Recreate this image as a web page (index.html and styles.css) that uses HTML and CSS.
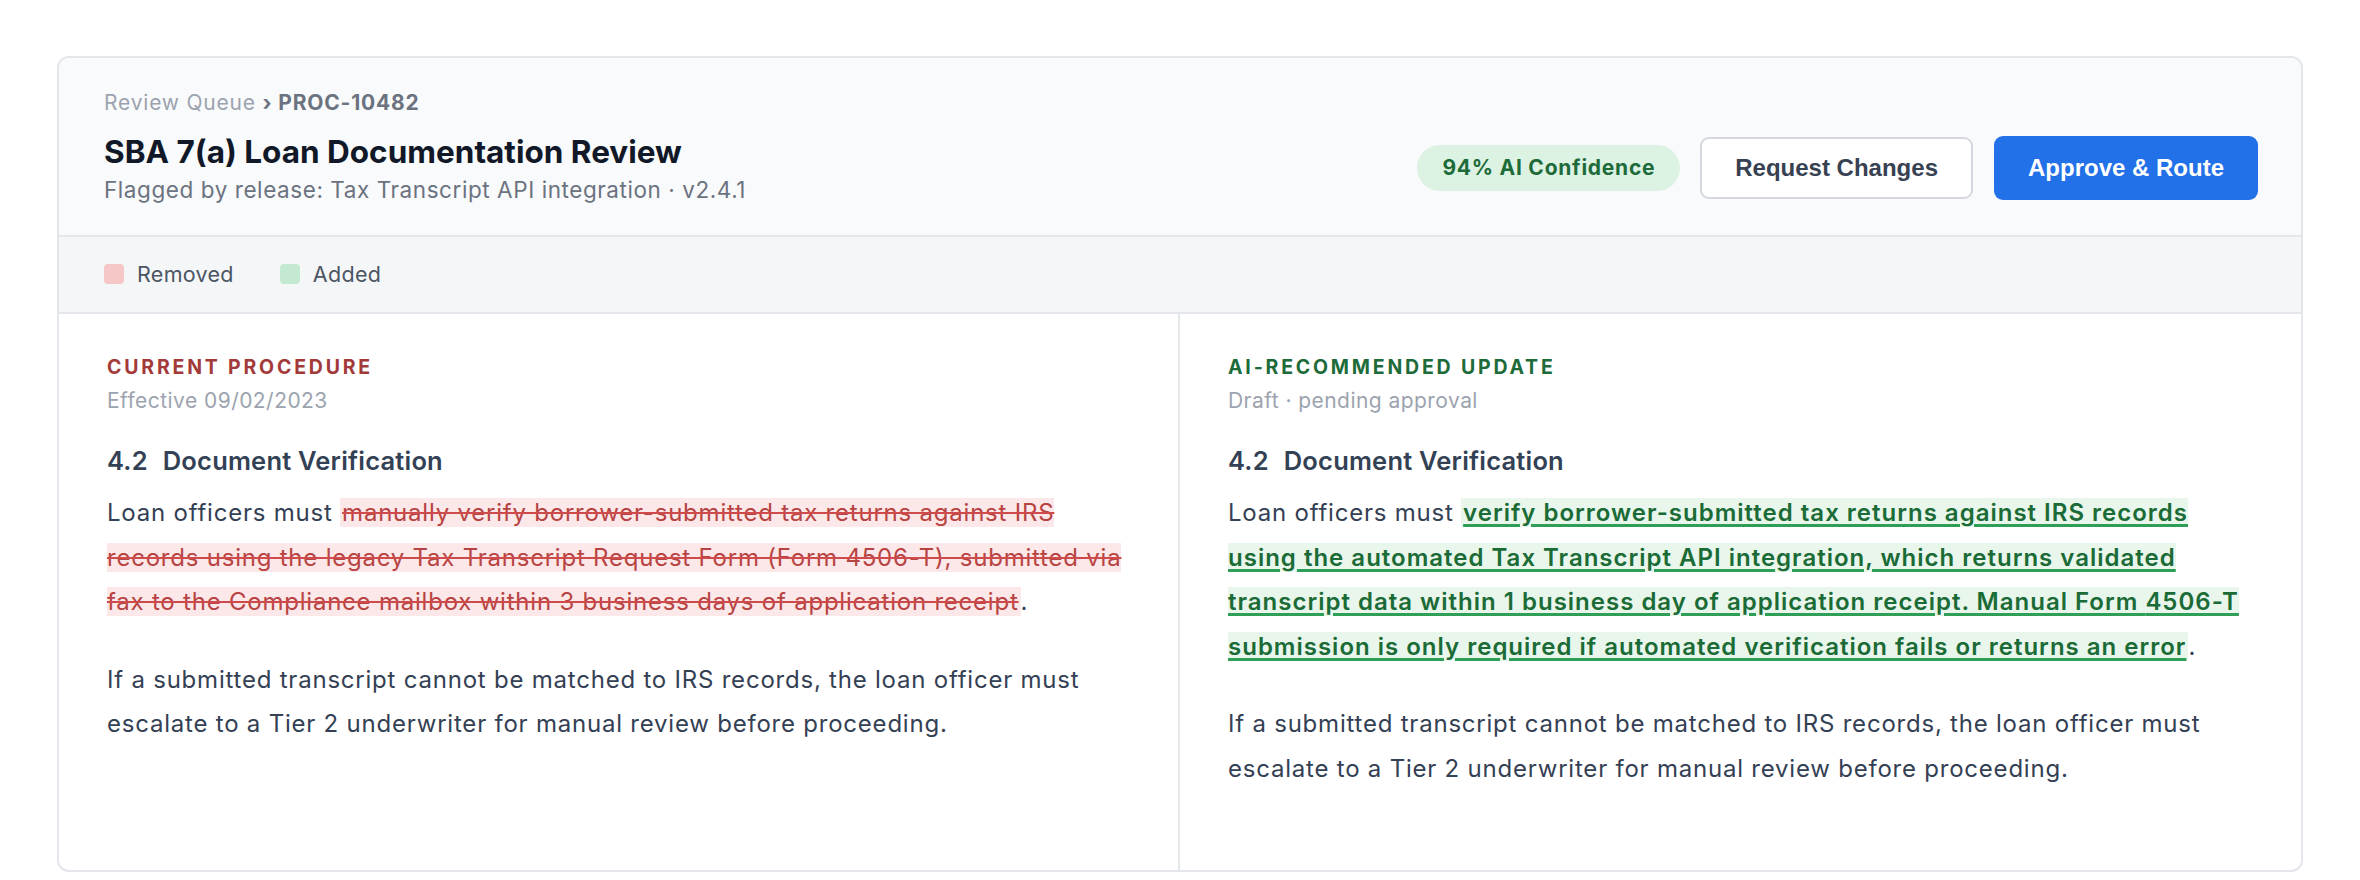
FILE: index.html
```html
<!DOCTYPE html>
<html lang="en">
<head>
<meta charset="utf-8">
<title>SBA 7(a) Loan Documentation Review</title>
<link rel="stylesheet" href="styles.css">
</head>
<body>
<div class="card">
  <header class="card-header">
    <div class="titles">
      <div class="crumbs"><span class="crumb-muted">Review Queue</span> <span class="crumb-strong">› PROC-10482</span></div>
      <h1 class="title">SBA 7(a) Loan Documentation Review</h1>
      <div class="subtitle">Flagged by release: Tax Transcript API integration · v2.4.1</div>
    </div>
    <div class="actions">
      <span class="badge">94% AI Confidence</span>
      <button class="btn btn-secondary">Request Changes</button>
      <button class="btn btn-primary">Approve &amp; Route</button>
    </div>
  </header>
  <div class="legend">
    <div class="legend-item"><span class="swatch swatch-removed"></span>Removed</div>
    <div class="legend-item"><span class="swatch swatch-added"></span>Added</div>
  </div>
  <div class="columns">
    <section class="col col-left">
      <div class="col-label label-current">CURRENT PROCEDURE</div>
      <div class="col-meta">Effective 09/02/2023</div>
      <h2 class="section-title"><span class="section-num">4.2</span>Document Verification</h2>
      <p class="para">Loan officers must <del class="removed">manually verify borrower-submitted tax returns against IRS records using the legacy Tax Transcript Request Form (Form 4506-T), submitted via fax to the Compliance mailbox within 3 business days of application receipt</del>.</p>
      <p class="para">If a submitted transcript cannot be matched to IRS records, the loan officer must escalate to a Tier 2 underwriter for manual review before proceeding.</p>
    </section>
    <section class="col col-right">
      <div class="col-label label-update">AI-RECOMMENDED UPDATE</div>
      <div class="col-meta">Draft · pending approval</div>
      <h2 class="section-title"><span class="section-num">4.2</span>Document Verification</h2>
      <p class="para">Loan officers must <ins class="added">verify borrower-submitted tax returns against IRS records using the automated Tax Transcript API integration, which returns validated transcript data within 1 business day of application receipt. Manual Form <span class="nowrap">4506-T</span> submission is only required if automated verification fails or returns an error</ins>.</p>
      <p class="para">If a submitted transcript cannot be matched to IRS records, the loan officer must escalate to a Tier 2 underwriter for manual review before proceeding.</p>
    </section>
  </div>
</div>
</body>
</html>
```
FILE: styles.css
```css
* { box-sizing: border-box; }

html, body {
  margin: 0;
  background: #ffffff;
}

body {
  padding: 56px 57px 0;
  font-family: Inter, "Noto Sans", sans-serif;
  color: #344054;
}

.card {
  border: 2px solid #e3e6eb;
  border-radius: 12px;
  overflow: hidden;
  background: #ffffff;
}

.card-header {
  display: flex;
  justify-content: space-between;
  align-items: flex-end;
  padding: 29px 43px 28px 45px;
  background: #f9fafb;
  border-bottom: 2px solid #e3e6eb;
}

.crumbs {
  font-size: 21px;
  line-height: 31.5px;
  letter-spacing: 0.8px;
  color: #9ca3af;
}

.crumb-strong {
  font-weight: 700;
  color: #6b7280;
}

.title {
  margin: 12.5px 0 1px;
  font-size: 31.5px;
  line-height: 41px;
  font-weight: 700;
  color: #111827;
}

.subtitle {
  font-size: 22.5px;
  line-height: 33.75px;
  letter-spacing: 0.57px;
  color: #6b7280;
}

.actions {
  display: flex;
  align-items: center;
  gap: 20px;
  margin-bottom: 7px;
}

.badge {
  display: inline-flex;
  align-items: center;
  height: 46px;
  padding: 0 25px;
  border-radius: 23px;
  background: #dcf2e3;
  color: #1e6b3a;
  font-size: 21px;
  font-weight: 700;
  letter-spacing: 0.75px;
}

.btn {
  font-family: "Liberation Sans", Arial, sans-serif;
  font-size: 24px;
  font-weight: 700;
  border-radius: 9px;
  cursor: pointer;
}

.btn-secondary {
  height: 62px;
  padding: 0 33px;
  background: #ffffff;
  border: 2px solid #d5d8de;
  color: #374151;
}

.btn-primary {
  height: 64px;
  padding: 0 34px;
  margin-left: 1px;
  background: #2271e8;
  border: none;
  color: #ffffff;
}

.legend {
  display: flex;
  align-items: center;
  gap: 46px;
  height: 77px;
  padding: 0 45px;
  background: #f4f6f8;
  border-bottom: 2px solid #e3e6eb;
}

.legend-item {
  display: flex;
  align-items: center;
  gap: 13px;
  font-size: 21.5px;
  letter-spacing: 0.3px;
  color: #4b5563;
}

.swatch {
  width: 20px;
  height: 20px;
  border-radius: 4px;
}

.swatch-removed { background: #f5c7c7; }
.swatch-added { background: #c3ead0; }

.columns {
  display: grid;
  grid-template-columns: 1fr 1fr;
}

.col {
  padding: 39px 48px 79px 48px;
}

.col-left {
  border-right: 2px solid #e5e7eb;
}

.col-label {
  font-size: 19.5px;
  line-height: 29px;
  font-weight: 700;
  letter-spacing: 2.8px;
}

.label-current { color: #a33a3a; }
.label-update { color: #1e6b3a; }

.col-meta {
  margin-top: 3px;
  font-size: 21px;
  line-height: 31.5px;
  letter-spacing: 0.45px;
  color: #9ca3af;
}

.section-title {
  margin: 27px 0 12.5px;
  font-size: 25.5px;
  line-height: 35.7px;
  font-weight: 600;
  letter-spacing: 0.2px;
  color: #334155;
}

.section-num {
  margin-right: 15px;
}

.para {
  margin: 0;
  font-size: 24px;
  line-height: 44.5px;
  letter-spacing: 0.78px;
  color: #344054;
}

.para + .para {
  margin-top: 33px;
}

.removed {
  padding: 0 2px;
  background: #fce8e8;
  color: #b84343;
  text-decoration: line-through;
  text-decoration-color: #cf4a4a;
  text-decoration-thickness: 2px;
}

.added {
  padding: 0 2px;
  background: #e8f6ec;
  color: #1b6b36;
  font-weight: 600;
  letter-spacing: 1px;
  text-decoration: underline;
  text-decoration-color: #2f9e57;
  text-decoration-thickness: 3px;
  text-underline-offset: 3px;
}

.nowrap {
  white-space: nowrap;
}
```
